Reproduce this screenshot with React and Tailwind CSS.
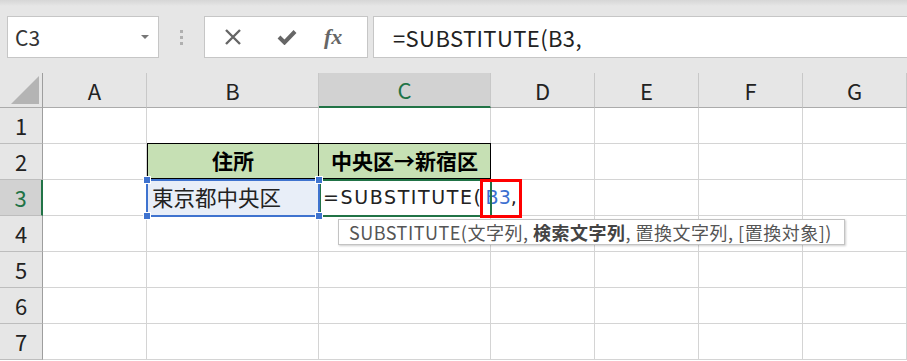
import React from "react";

const font = { fontFamily: '"Noto Sans CJK JP", "Noto Sans", sans-serif' };
const latin = { fontFamily: '"DejaVu Sans", "Noto Sans CJK JP", sans-serif' };

const cols = [
  { k: "A", w: "w-[104px]" },
  { k: "B", w: "w-[172px]" },
  { k: "C", w: "w-[172px]", sel: true },
  { k: "D", w: "w-[104px]" },
  { k: "E", w: "w-[104px]" },
  { k: "F", w: "w-[104px]" },
  { k: "G", w: "w-[104px]" },
];

const Cell = ({ w, className = "", children, style }) => (
  <div style={style} className={`${w} h-full shrink-0 border-r border-b border-[#d4d4d4] flex items-center ${className}`}>
    {children}
  </div>
);

const RowHead = ({ n, sel }) => (
  <div
    className={`w-[43px] h-full shrink-0 flex items-center justify-center text-[22px] border-b border-[#bdbdbd] ${
      sel ? "bg-[#d2d2d2] text-[#217346] border-r-2 border-r-[#217346]" : "bg-[#e6e6e6] text-[#222] border-r border-r-[#9e9e9e]"
    }`}
  >
    {n}
  </div>
);

export default function App() {
  return (
    <div className="w-[907px] h-[361px] overflow-hidden bg-white text-black" style={font}>
      {/* formula bar */}
      <div className="h-[73px] bg-[#e6e6e6] relative">
        <div className="h-[6px] bg-gradient-to-b from-[#d6d6d6] to-[#e6e6e6]" />
        <div className="flex items-start pt-[10px]">
          <div className="ml-[7px] w-[152px] h-[42px] bg-white border border-[#c6c6c6] flex items-center justify-between pl-[7px] pr-[9px]">
            <span className="text-[21px] text-[#333] leading-none">C3</span>
            <span className="w-0 h-0 border-l-[4px] border-r-[4px] border-t-[4px] border-l-transparent border-r-transparent border-t-[#777]" />
          </div>
          <div className="w-[45px] h-[42px] flex flex-col items-center justify-center gap-[3px]">
            <span className="w-[3px] h-[3px] bg-[#b0b0b0]" />
            <span className="w-[3px] h-[3px] bg-[#b0b0b0]" />
            <span className="w-[3px] h-[3px] bg-[#b0b0b0]" />
          </div>
          <div className="w-[164px] h-[42px] bg-white border border-[#c6c6c6] flex items-center">
            <svg width="18" height="18" viewBox="0 0 18 18" className="ml-[19px]">
              <path d="M2 2 L16 16 M16 2 L2 16" stroke="#666" strokeWidth="2.4" />
            </svg>
            <svg width="20" height="16" viewBox="0 0 20 16" className="ml-[35px]">
              <path d="M2 8 L7.5 13.5 L18 2.5" stroke="#666" strokeWidth="4" fill="none" />
            </svg>
            <span
              className="ml-[27px] text-[22px] italic font-bold text-[#666] leading-none"
              style={{ fontFamily: '"Liberation Serif", serif' }}
            >
              fx
            </span>
          </div>
          <div className="ml-[5px] flex-1 h-[42px] bg-white border border-[#c6c6c6] border-r-0 flex items-center pl-[19px]">
            <span className="text-[22px] tracking-[0.4px] text-[#222] leading-none">=SUBSTITUTE(B3,</span>
          </div>
        </div>
      </div>

      {/* sheet */}
      <div className="relative">
        <div className="flex h-[35px] bg-[#e6e6e6]">
          <div className="w-[43px] h-full shrink-0 border-r border-[#9e9e9e] border-b border-b-[#ababab] flex items-end justify-end pr-[3px] pb-[3px]">
            <svg width="28" height="28" viewBox="0 0 28 28">
              <path d="M28 0 L28 28 L0 28 Z" fill="#b4b4b4" />
            </svg>
          </div>
          {cols.map((c) => (
            <div
              key={c.k}
              className={`${c.w} h-full shrink-0 flex items-center justify-center text-[22px] border-r border-[#c8c8c8] ${
                c.sel ? "bg-[#d2d2d2] text-[#217346] border-b-2 border-b-[#217346]" : "text-[#222] border-b border-b-[#ababab]"
              }`}
            >
              {c.k}
            </div>
          ))}
        </div>

        {[1, 2, 3, 4, 5, 6, 7].map((n) => (
          <div key={n} className="flex h-[36px]">
            <RowHead n={n} sel={n === 3} />
            {n === 2 ? (
              <>
                <Cell w="w-[104px]" />
                <Cell w="w-[172px]" className="bg-[#c6e0b4] border-l border-t border-r-black border-b-black border-l-black border-t-black justify-center font-bold text-[21px] -mt-px h-[37px]">
                  住所
                </Cell>
                <Cell w="w-[172px]" className="bg-[#c6e0b4] border-t border-r-black border-b-black border-t-black justify-center font-bold text-[21px] -mt-px h-[37px]">
                  中央区→新宿区
                </Cell>
                {cols.slice(3).map((c) => (
                  <Cell key={c.k} w={c.w} />
                ))}
              </>
            ) : n === 3 ? (
              <>
                <Cell w="w-[104px]" />
                <Cell w="w-[172px]" className="bg-[#e8eef8] pl-[5px] text-[21.5px] text-[#222]">
                  東京都中央区
                </Cell>
                <Cell
                  w="w-[172px]"
                  style={latin}
                  className="pl-[4px] text-[19px] text-[#222] whitespace-nowrap overflow-visible relative z-10"
                >
                  <span className="tracking-[1.6px]">=SUBSTITUTE(</span>
                  <span className="text-[#3c6fd0] ml-[3px]">B3</span>
                  <span>,</span>
                </Cell>
                <Cell w="w-[104px]" />
                {cols.slice(4).map((c) => (
                  <Cell key={c.k} w={c.w} />
                ))}
              </>
            ) : (
              cols.map((c) => <Cell key={c.k} w={c.w} />)
            )}
          </div>
        ))}

        {/* B3 range selection */}
        <div className="absolute left-[146px] top-[106px] w-[174px] h-[38px] border-2 border-[#3f73cf] z-20 pointer-events-none">
          <span className="absolute -left-[4px] -top-[4px] w-[6px] h-[6px] bg-[#3f73cf] outline outline-1 outline-white" />
          <span className="absolute -right-[4px] -top-[4px] w-[6px] h-[6px] bg-[#3f73cf] outline outline-1 outline-white" />
          <span className="absolute -left-[4px] -bottom-[4px] w-[6px] h-[6px] bg-[#3f73cf] outline outline-1 outline-white" />
          <span className="absolute -right-[4px] -bottom-[4px] w-[6px] h-[6px] bg-[#3f73cf] outline outline-1 outline-white" />
        </div>

        {/* active cell C3 */}
        <div className="absolute left-[319px] top-[106px] w-[173px] h-[38px] border-2 border-[#217346] z-10 pointer-events-none" />

        {/* red highlight */}
        <div className="absolute left-[480px] top-[106px] w-[42px] h-[39px] border-[3px] border-[#ff0000] z-30" />

        {/* tooltip */}
        <div className="absolute left-[338px] top-[146px] w-[507px] h-[26px] bg-white border border-[#c3c3c3] shadow-[1px_1px_2px_rgba(0,0,0,0.2)] z-30 flex items-center pl-[10px] text-[18px] tracking-[0.5px] text-[#555] whitespace-nowrap leading-none">
          SUBSTITUTE(文字列,<b className="font-bold text-[#444]">&nbsp;検索文字列</b>, 置換文字列, [置換対象])
        </div>
      </div>
    </div>
  );
}
